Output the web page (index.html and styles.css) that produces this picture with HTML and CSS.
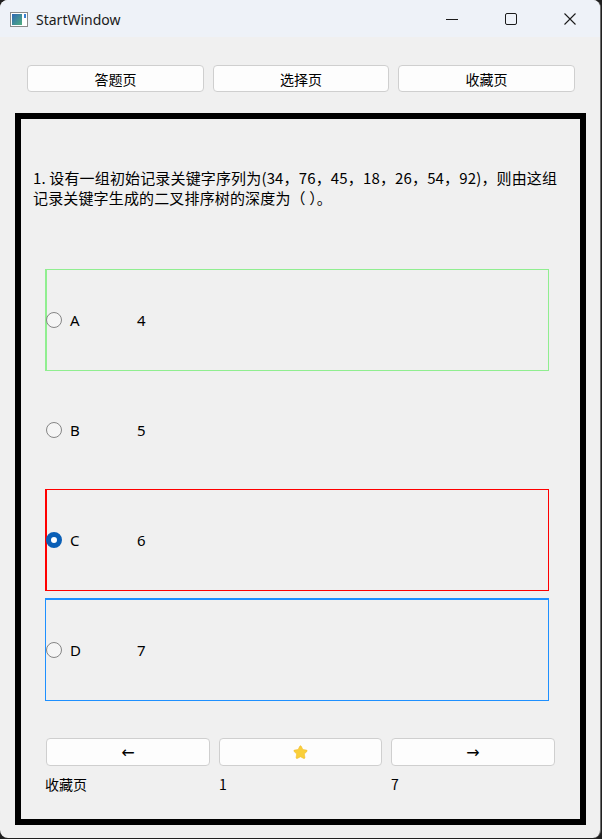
FILE: index.html
```html
<!DOCTYPE html>
<html lang="zh-CN">
<head>
<meta charset="utf-8">
<title>StartWindow</title>
<link rel="stylesheet" href="styles.css">
</head>
<body>
<div class="window">
  <div class="titlebar">
    <svg class="app-icon" width="18" height="15" viewBox="0 0 18 15">
      <defs>
        <linearGradient id="g" x1="0" y1="0" x2="1" y2="1">
          <stop offset="0" stop-color="#2f67b5"/>
          <stop offset="1" stop-color="#4fae7f"/>
        </linearGradient>
      </defs>
      <rect x="0.5" y="0.5" width="17" height="14" fill="#ffffff" stroke="#8a8a8a"/>
      <rect x="2" y="2" width="10" height="11" fill="url(#g)"/>
      <rect x="14" y="2" width="2" height="4" fill="#3a7fd0"/>
    </svg>
    <span class="title">StartWindow</span>
    <div class="controls">
      <svg class="ctl" width="14" height="14" viewBox="0 0 14 14"><line x1="1" y1="7.5" x2="13" y2="7.5" stroke="#1b1b1b" stroke-width="1"/></svg>
      <svg class="ctl" width="14" height="14" viewBox="0 0 14 14"><rect x="1.5" y="1.5" width="11" height="11" rx="1.5" fill="none" stroke="#1b1b1b" stroke-width="1"/></svg>
      <svg class="ctl" width="14" height="14" viewBox="0 0 14 14"><path d="M1.5 1.5 L12.5 12.5 M12.5 1.5 L1.5 12.5" stroke="#1b1b1b" stroke-width="1.1"/></svg>
    </div>
  </div>

  <div class="nav">
    <button class="btn">答题页</button>
    <button class="btn">选择页</button>
    <button class="btn">收藏页</button>
  </div>

  <div class="frame">
    <p class="question">1. 设有一组初始记录关键字序列为(34，76，45，18，26，54，92)，则由这组<br>记录关键字生成的二叉排序树的深度为（ ）。</p>

    <div class="options">
      <div class="option opt-green">
        <span class="radio"></span><span class="letter">A</span><span class="value">4</span>
      </div>
      <div class="option">
        <span class="radio"></span><span class="letter">B</span><span class="value">5</span>
      </div>
      <div class="option opt-red">
        <span class="radio checked"></span><span class="letter">C</span><span class="value">6</span>
      </div>
      <div class="option opt-blue">
        <span class="radio"></span><span class="letter">D</span><span class="value">7</span>
      </div>
    </div>

    <div class="actions">
      <button class="btn arrow">←</button>
      <button class="btn">
        <svg width="15" height="14" viewBox="0 0 24 23"><path d="M12 1.2c.6 0 1 .3 1.3.9l2.6 5.3 5.8.9c1.2.2 1.7 1.6.8 2.4l-4.2 4.1 1 5.8c.2 1.2-1 2.1-2.1 1.5L12 19.4l-5.2 2.7c-1.1.6-2.3-.3-2.1-1.5l1-5.8-4.2-4.1c-.9-.8-.4-2.2.8-2.4l5.8-.9 2.6-5.3c.3-.6.7-.9 1.3-.9z" fill="#f9cf3a" stroke="#f2b51e" stroke-width="0.8"/></svg>
      </button>
      <button class="btn arrow">→</button>
    </div>
    <div class="status">
      <span>收藏页</span>
      <span>1</span>
      <span>7</span>
    </div>
  </div>
</div>
</body>
</html>
```

FILE: styles.css
```css
* { box-sizing: border-box; }
html, body { margin: 0; padding: 0; }
body {
  background: #202020;
  width: 602px;
  height: 839px;
  overflow: hidden;
  font-family: "Noto Sans", "Noto Sans CJK SC", sans-serif;
  color: #000;
}
.window {
  width: 601px;
  height: 838px;
  background: #f0f0f0;
  border-radius: 8px;
  overflow: hidden;
  border-right: 1px solid #6b6b6b;
}
.titlebar {
  height: 37px;
  background: #eef2f8;
  display: flex;
  align-items: center;
}
.app-icon { margin-left: 10px; margin-top: 1px; }
.title {
  margin-left: 8px;
  font-family: "Noto Sans", sans-serif;
  font-size: 14px;
  color: #1a1a1a;
  margin-top: 1px;
}
.controls {
  margin-left: auto;
  display: flex;
  align-items: center;
  margin-right: 23px;
  gap: 45px;
}
.nav {
  margin: 28px 25px 0 27px;
  display: grid;
  grid-template-columns: 177px 176px 177px;
  column-gap: 9px;
}
.btn {
  height: 27px;
  background: #fdfdfd;
  border: 1px solid #cfcfcf;
  border-radius: 4px;
  font-family: "Noto Sans CJK SC", "Noto Sans", sans-serif;
  font-size: 14px;
  color: #000;
  padding: 0;
  display: flex;
  align-items: center;
  justify-content: center;
}
.frame {
  margin: 21px 0 0 15px;
  width: 571px;
  height: 712px;
  border: 6px solid #000;
}
.question {
  margin: 49px 0 0 12px;
  font-family: "Noto Sans CJK SC", sans-serif;
  font-size: 15px;
  line-height: 20px;
  white-space: nowrap;
  letter-spacing: 0.15px;
}
.options {
  margin: 61px 0 0 24px;
  width: 504px;
  display: flex;
  flex-direction: column;
  gap: 8px;
}
.option {
  height: 102px;
  border: 1px solid transparent;
  display: flex;
  align-items: center;
  font-size: 15px;
}
.opt-green { border-color: #90ee90; border-left-width: 2px; }
.opt-red { border-color: #ff0000; border-left-width: 2px; }
.opt-blue { border-color: #1e90ff; border-top-width: 2px; margin-top: -1px; height: 103px; }
.opt-green .radio, .opt-red .radio { margin-left: -1px; }
.radio {
  width: 16px;
  height: 16px;
  border-radius: 50%;
  border: 1px solid #858585;
  background: #f5f5f5;
  flex: none;
}
.radio.checked {
  border: 5px solid #0a5fb6;
  background: #ffffff;
}
.letter {
  margin-left: 8px;
  width: 67px;
}
.actions {
  margin: 37px 0 0 25px;
  width: 509px;
  display: grid;
  grid-template-columns: 164px 163px 164px;
  column-gap: 9px;
}
.actions .btn { height: 28px; }
.arrow {
  font-family: "DejaVu Sans", sans-serif;
  font-size: 16px;
}
.status {
  margin: 8px 0 0 24px;
  display: grid;
  grid-template-columns: 174px 172px 163px;
  font-family: "Noto Sans CJK SC", sans-serif;
  font-size: 14px;
  line-height: 20px;
}
```
